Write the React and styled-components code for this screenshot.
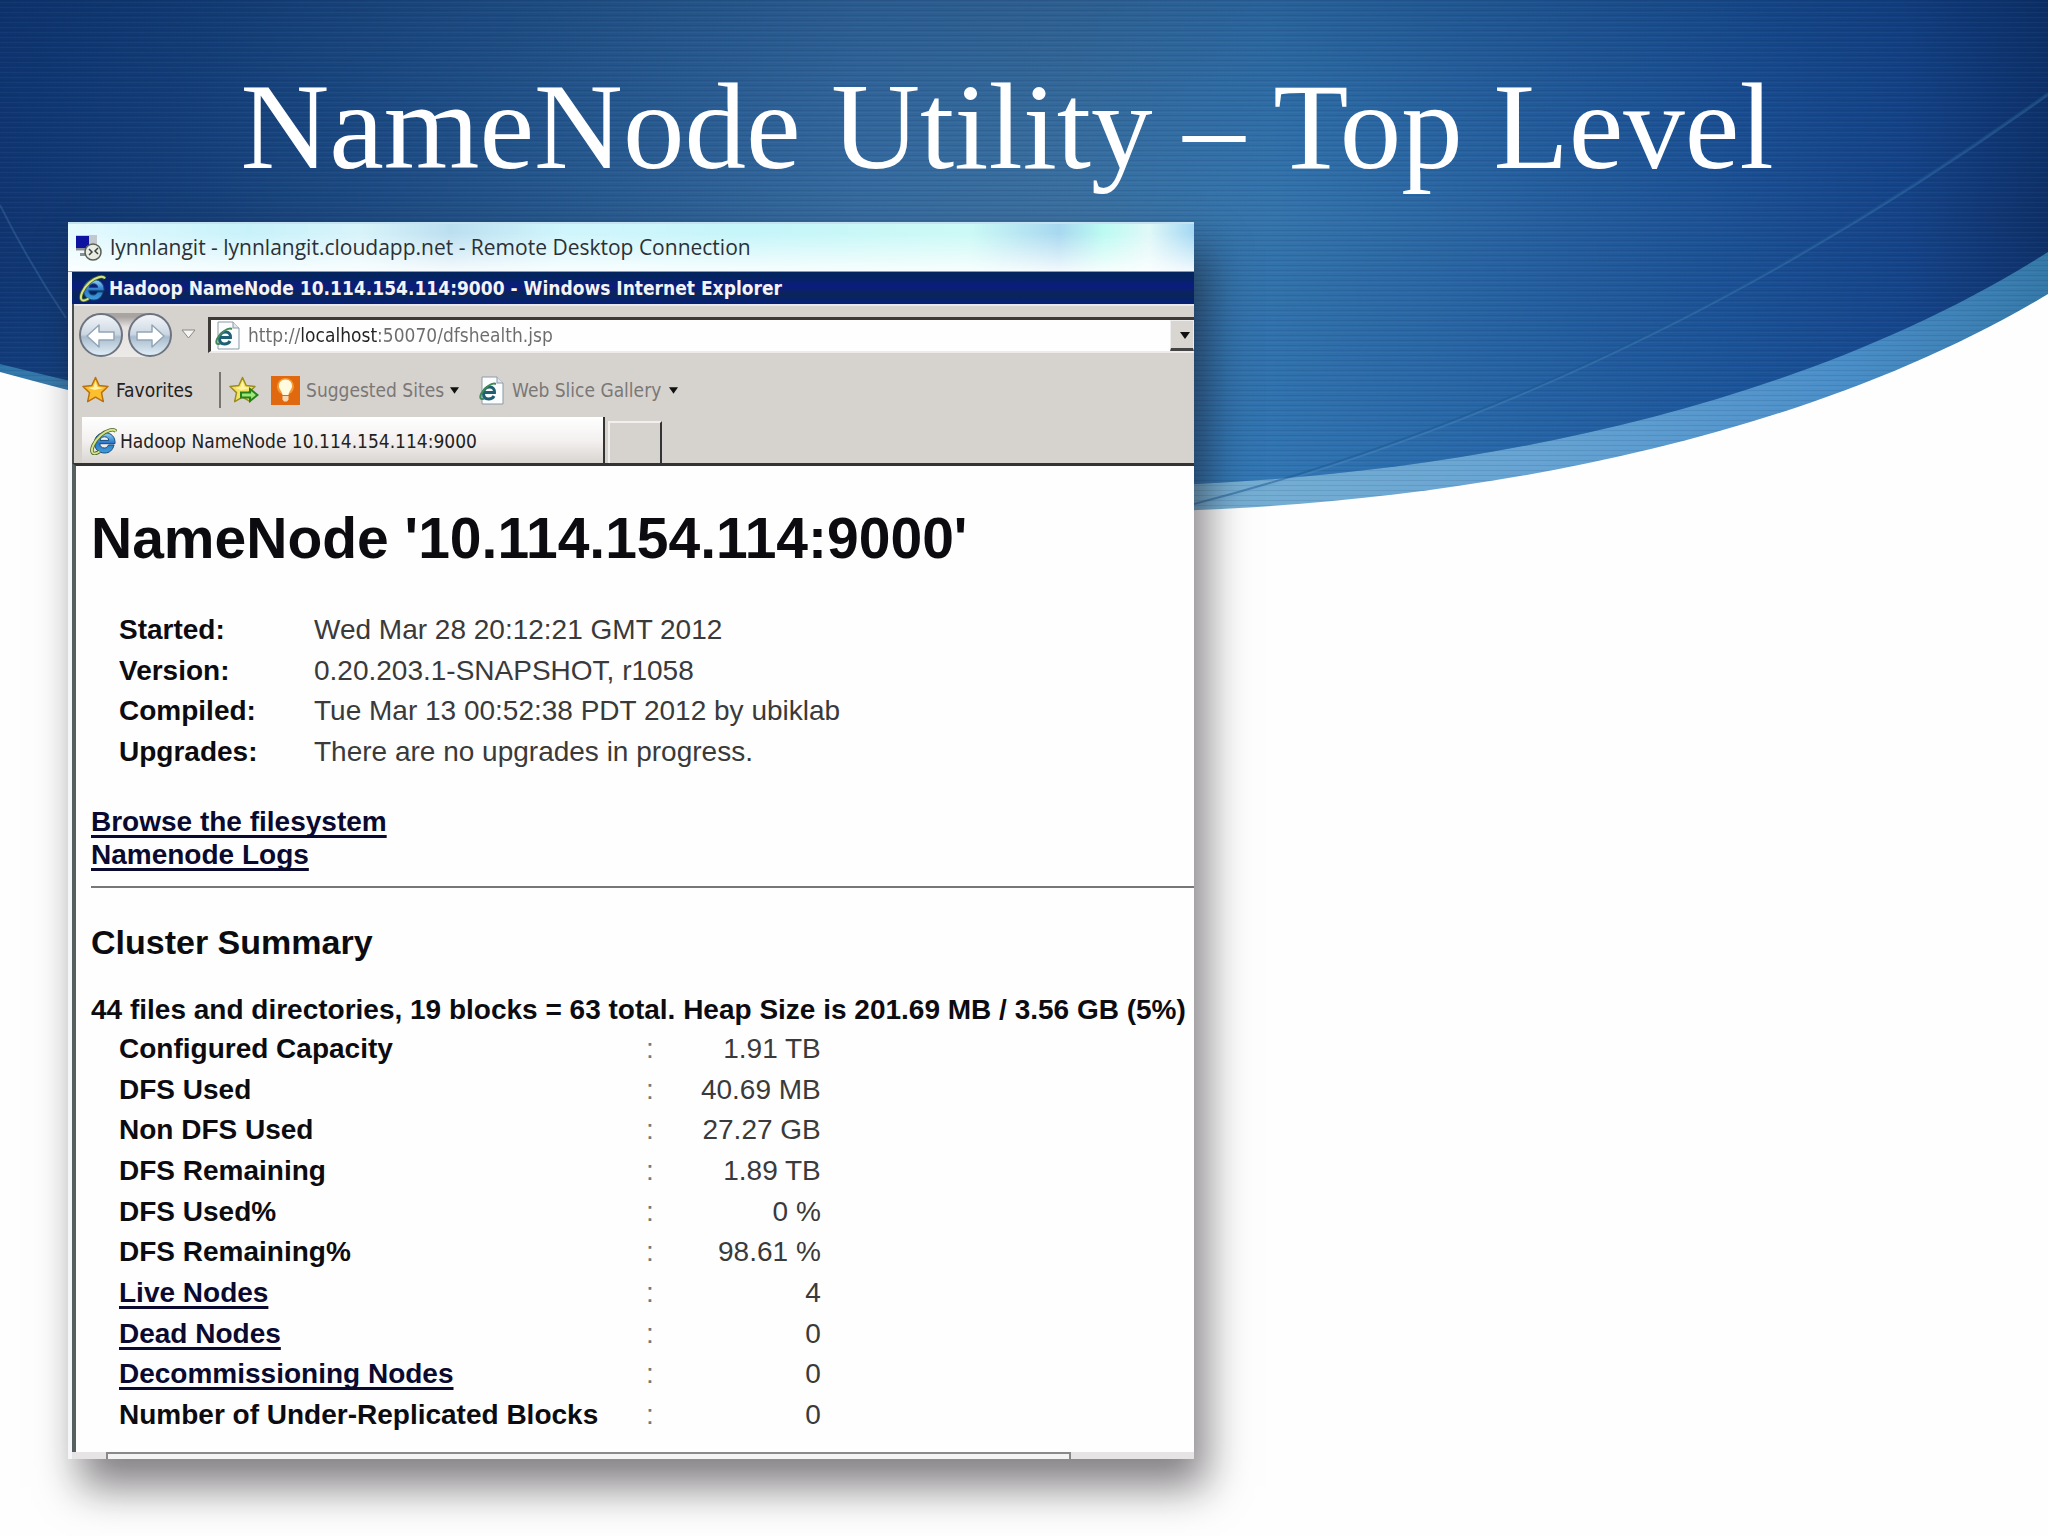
import React from "react"
import styled, { createGlobalStyle } from "styled-components"

const GlobalStyle = createGlobalStyle`
  body {
    margin: 0;
    background: #fefefe;
  }
  * {
    box-sizing: border-box;
  }
`

const details = [
  ["Started:", "Wed Mar 28 20:12:21 GMT 2012"],
  ["Version:", "0.20.203.1-SNAPSHOT, r1058"],
  ["Compiled:", "Tue Mar 13 00:52:38 PDT 2012 by ubiklab"],
  ["Upgrades:", "There are no upgrades in progress."],
]

const summary = [
  { label: "Configured Capacity", value: "1.91 TB" },
  { label: "DFS Used", value: "40.69 MB" },
  { label: "Non DFS Used", value: "27.27 GB" },
  { label: "DFS Remaining", value: "1.89 TB" },
  { label: "DFS Used%", value: "0 %" },
  { label: "DFS Remaining%", value: "98.61 %" },
  { label: "Live Nodes", value: "4", link: true },
  { label: "Dead Nodes", value: "0", link: true },
  { label: "Decommissioning Nodes", value: "0", link: true },
  { label: "Number of Under-Replicated Blocks", value: "0" },
]

const Slide = styled.main`
  position: relative;
  min-height: 100vh;
  overflow: hidden;
  padding: 57px 0 77px;
`

const Backdrop = styled.svg`
  position: absolute;
  top: 0;
  left: 0;
  width: 100%;
  display: block;
`

const SlideTitle = styled.h1`
  position: relative;
  margin: 0 0 25px;
  padding-right: 34px;
  font-family: "Liberation Serif", serif;
  font-size: 123px;
  font-weight: 400;
  line-height: 140px;
  text-align: center;
  color: #fff;
`

const RemoteWindow = styled.section`
  position: relative;
  width: 55%;
  margin-left: 68px;
  background: #f4f6f8;
  font-family: "DejaVu Sans Condensed", "DejaVu Sans", sans-serif;
  font-size: 19px;
  box-shadow: 12px 28px 40px rgba(20, 14, 20, 0.52);
`

const RemoteBar = styled.header`
  display: flex;
  align-items: center;
  gap: 7px;
  height: 50px;
  padding: 0 0 2px 6px;
  border-top: 2px solid #c4e2f0;
  border-bottom: 1px solid #8c98b4;
  font-family: "Open Sans", sans-serif;
  font-size: 21px;
  color: #2b3136;
  white-space: nowrap;
  background:
    linear-gradient(rgba(255, 255, 255, 0) 20%, rgba(255, 255, 255, 0.85)),
    linear-gradient(
      90deg,
      #e4faff 0%,
      #c8f2fa 16%,
      #d8f4fa 26%,
      #bcdff0 34%,
      #d0f6fc 44%,
      #c6f5fa 60%,
      #ccfaf6 80%,
      #a8d8f0 88%,
      #bcfbf2 92%,
      #e0f8f8 96%,
      #a4d8f4 100%
    );
`

const Browser = styled.div`
  margin-left: 4px;
  overflow: hidden;
`

const BrowserBar = styled.div`
  display: flex;
  align-items: center;
  gap: 3px;
  height: 32px;
  padding-left: 7px;
  font-size: 19px;
  font-weight: 700;
  color: #f4f4f4;
  white-space: nowrap;
  background: linear-gradient(#04245f 15%, #0b1c80 45%, #0a2558 70%, #04207a);
`

const Chrome = styled.div`
  border-left: 2px solid #4a4e4e;
  background: #d6d3cf;
`

const NavRow = styled.div`
  display: flex;
  align-items: center;
  height: 59px;
  padding-left: 5px;
  border-top: 2px solid #e8e8ea;
`

const RoundButtons = styled.div`
  display: flex;
  gap: 5px;
  border-radius: 22px;
  background: linear-gradient(#a9a4a2 0 4px, #e6e2e0 14px, #eceae8);
`

const RoundButton = styled.button`
  width: 44px;
  height: 44px;
  padding: 0;
  border: 2px solid #6d7480;
  border-radius: 50%;
  background: linear-gradient(#f2f5f8, #ccd7e3 48%, #a9bccd 55%, #dfedf6);

  svg {
    display: block;
  }
`

const HistoryButton = styled.button`
  width: 36px;
  padding: 0 9px;
  border: 0;
  background: none;

  svg {
    display: block;
  }
`

const AddressBox = styled.div`
  flex: 1;
  display: flex;
  align-items: center;
  height: 36px;
  padding-left: 4px;
  border-top: 3px solid #3c3936;
  border-left: 3px solid #3c3936;
  border-bottom: 2px solid #eeecea;
  background: #fefefe;
`

/* scheme and path stay grey, the host name is dark */
const AddressInput = styled.input`
  flex: 1;
  min-width: 0;
  height: 30px;
  margin-left: 8px;
  padding: 0;
  border: 0;
  outline: 0;
  font: inherit;
  color: transparent;
  background: linear-gradient(
    90deg,
    #6c6c6c 0 54px,
    #222 54px 129px,
    #6c6c6c 129px
  );
  background-clip: text;
`

const AddressToggle = styled.button`
  align-self: stretch;
  width: 24px;
  padding: 0 0 0 5px;
  border: 1px solid #eee;
  border-bottom: 3px solid #444;
  background: #d9d6d2;
`

const FavoritesRow = styled.div`
  display: flex;
  align-items: center;
  height: 54px;
  padding-left: 8px;
`

const ToolButton = styled.button`
  display: flex;
  align-items: center;
  gap: ${(props) => props.$gap || 6}px;
  margin: 0 ${(props) => props.$after || 0}px 0 0;
  padding: 0;
  border: 0;
  background: none;
  font: inherit;
  color: ${(props) => (props.$muted ? "#7a7876" : "#222")};
  white-space: nowrap;
`

const Separator = styled.div`
  width: 2px;
  height: 36px;
  margin-right: 8px;
  background: #777471;
`

const TabRow = styled.div`
  display: flex;
  align-items: flex-end;
  height: 46px;
  padding-left: 8px;
`

const Tab = styled.button`
  display: flex;
  align-items: center;
  gap: 3px;
  width: 47%;
  height: 46px;
  padding: 2px 0 0 8px;
  border: 0;
  border-right: 2px solid #333;
  background: linear-gradient(#fff, #f4f1f0 50%, #d8d5d1);
  font: inherit;
  color: #222;
  white-space: nowrap;
`

const NewTab = styled.button`
  width: 54px;
  height: 42px;
  margin-left: 3px;
  border: 0;
  border-top: 2px solid #f2f0ee;
  border-left: 2px solid #f2f0ee;
  border-right: 2px solid #333;
  background: #d6d3cf;
`

const Page = styled.article`
  padding: 40px 0 17px 15px;
  border-top: 3px solid #333;
  border-left: 4px solid #566060;
  background: #fefefe;
  font-family: "Liberation Sans", Arial, sans-serif;
  font-size: 28px;
  line-height: 33px;
  color: #0c0c10;
`

const PageTitle = styled.h2`
  margin: 0 0 39px;
  font-size: 57px;
  line-height: 64px;
  white-space: nowrap;
`

const PageLink = styled.a`
  color: #0a0a30;
  font-weight: 700;
  text-decoration-thickness: 3px;
  text-underline-offset: 4px;
  text-decoration-skip-ink: none;
`

const DetailTable = styled.table`
  height: 163px;
  margin: 0 0 33px 28px;
  border-collapse: collapse;

  th {
    width: 195px;
    padding: 0;
    text-align: left;
  }

  td {
    padding: 0;
    color: #3a3a3a;
    white-space: nowrap;
  }
`

const Links = styled.nav`
  display: flex;
  flex-direction: column;
  align-items: flex-start;
  margin-bottom: 15px;
`

const Rule = styled.hr`
  height: 2px;
  margin: 0 0 34px;
  border: 0;
  background: #777;
`

const SectionTitle = styled.h3`
  margin: 0 0 31px;
  font-size: 34px;
  line-height: 40px;
`

const Totals = styled.p`
  margin: 0 0 2px;
  font-weight: 700;
  white-space: nowrap;
`

const SummaryTable = styled.table`
  height: 407px;
  margin-left: 28px;
  border-collapse: collapse;

  th {
    width: 527px;
    padding: 0;
    text-align: left;
  }

  td {
    padding: 0;
    color: #777;
    white-space: nowrap;
  }

  td:last-child {
    width: 167px;
    color: #3a3a3a;
    text-align: right;
  }
`

const ScrollTrack = styled.div`
  height: 7px;
  padding: 0 11% 0 34px;
  background: #e6e4e4;
`

const ScrollThumb = styled.div`
  height: 7px;
  border: 2px solid #8a8888;
  border-bottom: 0;
  background: #f4f3f3;
`

const IeLogo = ({ size = 27 }) => (
  <svg width={size} height={size} viewBox="0 0 27 27" aria-hidden="true">
    <defs>
      <linearGradient id="ieBlue" x1="0" y1="0" x2="0" y2="1">
        <stop offset="0" stopColor="#8fd4f4" />
        <stop offset="0.5" stopColor="#2a78cc" />
        <stop offset="1" stopColor="#3f9fd8" />
      </linearGradient>
    </defs>
    <path
      d="M24 17h-5.500c-.8 2-2.300 3-4.200 3-2.600 0-4.300-1.500-4.500-4.300H25c.5-6.700-3.700-11-10.200-11C8.600 4.700 4.500 8.900 4.500 15c0 6 4 10 10.200 10 4.700 0 8.100-2.800 9.300-8zM10 12.400c.4-2.300 2-3.600 4.500-3.600s4 1.300 4.300 3.600z"
      fill="url(#ieBlue)"
      stroke="#164a7c"
    />
    <path
      d="M26 3.500C24 .2 16.500 2 10.500 7.500 4 13.500.5 21.500 2.500 24.500c1.200 1.700 4.200 1 7-1"
      fill="none"
      stroke="#48682c"
      strokeWidth="3.600"
    />
    <path
      d="M26 3.500C24 .2 16.500 2 10.500 7.500 4 13.500.5 21.500 2.500 24.500c1.200 1.700 4.200 1 7-1"
      fill="none"
      stroke="#d9e48a"
      strokeWidth="2"
    />
  </svg>
)

const PageIcon = () => (
  <svg width="25" height="29" viewBox="0 0 25 29" aria-hidden="true">
    <path d="M3 1h15l6 6v21H3z" fill="#fafcfd" stroke="#8d9aa6" />
    <path d="M18 1v6h6" fill="#dfe5ea" stroke="#8d9aa6" />
    <path
      d="M5 16.500h10.500c.3-3-1.500-5.500-4.800-5.500C7 11 4.500 14 4.500 17.500S6.500 23 9.500 23c2.500 0 4.500-1 5.500-3"
      fill="none"
      stroke="#1e5f74"
      strokeWidth="3"
    />
    <path
      d="M17 8C13 6 5 12 2 18c-1.500 4-.5 6 3 4.500"
      fill="none"
      stroke="#3f8a58"
      strokeWidth="2"
    />
  </svg>
)

const Star = ({ add }) => (
  <svg width={add ? 30 : 27} height="28" viewBox={add ? "0 0 30 28" : "0 0 27 28"} aria-hidden="true">
    <path
      d="M13.500 1.500l3.700 8 8.800 1-6.500 6.100 1.800 9-7.800-4.400-7.800 4.400 1.800-9L1 10.500l8.800-1z"
      fill={add ? "#f4e260" : "#fdbf2d"}
      stroke={add ? "#9c8c1c" : "#b8720f"}
      strokeWidth="1.500"
      strokeLinejoin="round"
    />
    <path d="M13.500 5l2 6 6 1-9 2-6-2 5-1z" fill="#fff3a8" />
    {add && (
      <path
        d="M12 16.500h9v-3.500l7.500 6-7.500 6v-3.500h-9z"
        fill="#9be878"
        stroke="#28801c"
        strokeWidth="2"
      />
    )}
  </svg>
)

const Bulb = () => (
  <svg width="29" height="29" viewBox="0 0 29 29" aria-hidden="true">
    <rect width="29" height="29" fill="#e0690f" />
    <circle cx="14.500" cy="10.500" r="8.500" fill="#f59a35" />
    <path
      d="M14.500 3.500c-4.200 0-6.500 3-6.500 6.500 0 3.600 3 5 3.500 9h6c.5-4 3.500-5.400 3.500-9 0-3.500-2.300-6.500-6.500-6.500z"
      fill="#fffbe0"
    />
    <path d="M11.500 20h6v3.500l-1.500 2h-3l-1.500-2z" fill="#f6d9b4" />
  </svg>
)

const RemoteIcon = () => (
  <svg width="29" height="28" viewBox="0 0 29 28" aria-hidden="true">
    <path d="M2 2h21v16H2z" fill="#c3c8ce" />
    <path d="M2 3h13v12H2z" fill="#0d12a0" />
    <path d="M2 15h12v2H2zM6 20h8v3H6z" fill="#8a9095" />
    <circle cx="19" cy="19" r="8" fill="#e8ece4" stroke="#566055" strokeWidth="1.500" />
    <path d="M15 16l3 3-3 3M24 15l-3 3 3 3" fill="none" stroke="#3a4438" strokeWidth="1.500" />
  </svg>
)

const Arrow = ({ left }) => (
  <svg width="40" height="40" viewBox="0 0 40 40" aria-hidden="true">
    <path
      d={
        left
          ? "M6 21l12-11v7h15v8H18v7z"
          : "M34 21L22 10v7H7v8h15v7z"
      }
      fill="#fff"
      stroke="#93a5b8"
      strokeWidth="1.500"
      strokeLinejoin="round"
    />
  </svg>
)

const Caret = ({ size = 9 }) => (
  <svg width={size} height="7" viewBox="0 0 10 7" aria-hidden="true">
    <path d="M0 0h10L5 7z" fill="#111" />
  </svg>
)

const Swoosh = () => (
  <Backdrop viewBox="0 0 2048 520" aria-hidden="true">
    <defs>
      <linearGradient id="sky">
        <stop offset="0" stopColor="#10346f" />
        <stop offset="0.100" stopColor="#163f78" />
        <stop offset="0.250" stopColor="#245489" />
        <stop offset="0.420" stopColor="#376b9e" />
        <stop offset="0.520" stopColor="#3b709f" />
        <stop offset="0.620" stopColor="#3474ab" />
        <stop offset="0.730" stopColor="#28629f" />
        <stop offset="0.850" stopColor="#1b4f92" />
        <stop offset="0.930" stopColor="#154286" />
        <stop offset="1" stopColor="#0e2f66" />
      </linearGradient>
      <linearGradient id="depth" x1="0" y1="0" x2="0" y2="1">
        <stop offset="0" stopColor="#04285c" stopOpacity="0.250" />
        <stop offset="0.450" stopColor="#0c4a98" stopOpacity="0" />
        <stop offset="1" stopColor="#2a7cc8" stopOpacity="0.280" />
      </linearGradient>
      <linearGradient id="rim">
        <stop offset="0" stopColor="#2f76a8" />
        <stop offset="0.050" stopColor="#3f7cae" />
        <stop offset="0.580" stopColor="#78b0d2" />
        <stop offset="0.750" stopColor="#66a3d2" />
        <stop offset="0.900" stopColor="#4a8ec8" />
        <stop offset="1" stopColor="#3478a8" />
      </linearGradient>
      <pattern id="lines" width="8" height="5" patternUnits="userSpaceOnUse">
        <path d="M0 .5h8" stroke="#02204e" strokeOpacity="0.100" />
        <path d="M0 2.500h8" stroke="#9cc8f0" strokeOpacity="0.050" />
      </pattern>
    </defs>
    <path
      d="M0 0h2048v294C1768 462 1380 512 1100 512 700 512 320 460 0 372z"
      fill="url(#rim)"
    />
    <path
      d="M0 0h2048v252C1768 430 1380 486 1100 486 760 486 340 450 0 364z"
      fill="url(#sky)"
    />
    <path
      d="M0 0h2048v252C1768 430 1380 486 1100 486 760 486 340 450 0 364z"
      fill="url(#depth)"
    />
    <path
      d="M0 0h2048v294C1768 462 1380 512 1100 512 700 512 320 460 0 372z"
      fill="url(#lines)"
    />
    <path
      d="M1194 504C1520 420 1800 270 2048 93"
      fill="none"
      stroke="#1c5790"
      strokeWidth="2"
      strokeOpacity="0.500"
    />
    <path
      d="M1194 506C1520 422 1800 272 2048 95M0 205Q30 265 66 318"
      fill="none"
      stroke="#6aa4d8"
      strokeWidth="2"
      strokeOpacity="0.220"
    />
  </Backdrop>
)

export default function App() {
  return (
    <Slide>
      <GlobalStyle />
      <Swoosh />
      <SlideTitle>NameNode Utility – Top Level</SlideTitle>
      <RemoteWindow>
        <RemoteBar>
          <RemoteIcon />
          <span>lynnlangit - lynnlangit.cloudapp.net - Remote Desktop Connection</span>
        </RemoteBar>
        <Browser>
          <BrowserBar>
            <IeLogo />
            <span>Hadoop NameNode 10.114.154.114:9000 - Windows Internet Explorer</span>
          </BrowserBar>
          <Chrome>
            <NavRow>
              <RoundButtons>
                <RoundButton aria-label="Back">
                  <Arrow left />
                </RoundButton>
                <RoundButton aria-label="Forward">
                  <Arrow />
                </RoundButton>
              </RoundButtons>
              <HistoryButton aria-label="Recent pages">
                <svg width="16" height="12" viewBox="0 0 16 12">
                  <path d="M1 1h13L7.500 9z" fill="#f6f5f4" stroke="#8a8785" />
                </svg>
              </HistoryButton>
              <AddressBox>
                <PageIcon />
                <AddressInput
                  aria-label="Address"
                  defaultValue="http://localhost:50070/dfshealth.jsp"
                />
                <AddressToggle aria-label="Show addresses">
                  <Caret size={12} />
                </AddressToggle>
              </AddressBox>
            </NavRow>
            <FavoritesRow>
              <ToolButton $gap={7} $after={26}>
                <Star />
                Favorites
              </ToolButton>
              <Separator />
              <ToolButton $after={12} aria-label="Add to favorites bar">
                <Star add />
              </ToolButton>
              <ToolButton $muted $after={20}>
                <Bulb />
                Suggested Sites
                <Caret />
              </ToolButton>
              <ToolButton $muted $gap={8}>
                <PageIcon />
                Web Slice Gallery
                <Caret />
              </ToolButton>
            </FavoritesRow>
            <TabRow>
              <Tab>
                <IeLogo />
                Hadoop NameNode 10.114.154.114:9000
              </Tab>
              <NewTab aria-label="New tab" />
            </TabRow>
          </Chrome>
          <Page>
            <PageTitle>NameNode '10.114.154.114:9000'</PageTitle>
            <DetailTable>
              <tbody>
                {details.map(([label, value]) => (
                  <tr key={label}>
                    <th scope="row">{label}</th>
                    <td>{value}</td>
                  </tr>
                ))}
              </tbody>
            </DetailTable>
            <Links>
              <PageLink href="#browse">Browse the filesystem</PageLink>
              <PageLink href="#logs">Namenode Logs</PageLink>
            </Links>
            <Rule />
            <SectionTitle>Cluster Summary</SectionTitle>
            <Totals>
              44 files and directories, 19 blocks = 63 total. Heap Size is 201.69 MB / 3.56 GB (5%)
            </Totals>
            <SummaryTable>
              <tbody>
                {summary.map((row) => (
                  <tr key={row.label}>
                    <th scope="row">
                      {row.link ? <PageLink href="#nodes">{row.label}</PageLink> : row.label}
                    </th>
                    <td>:</td>
                    <td>{row.value}</td>
                  </tr>
                ))}
              </tbody>
            </SummaryTable>
          </Page>
          <ScrollTrack>
            <ScrollThumb />
          </ScrollTrack>
        </Browser>
      </RemoteWindow>
    </Slide>
  )
}
